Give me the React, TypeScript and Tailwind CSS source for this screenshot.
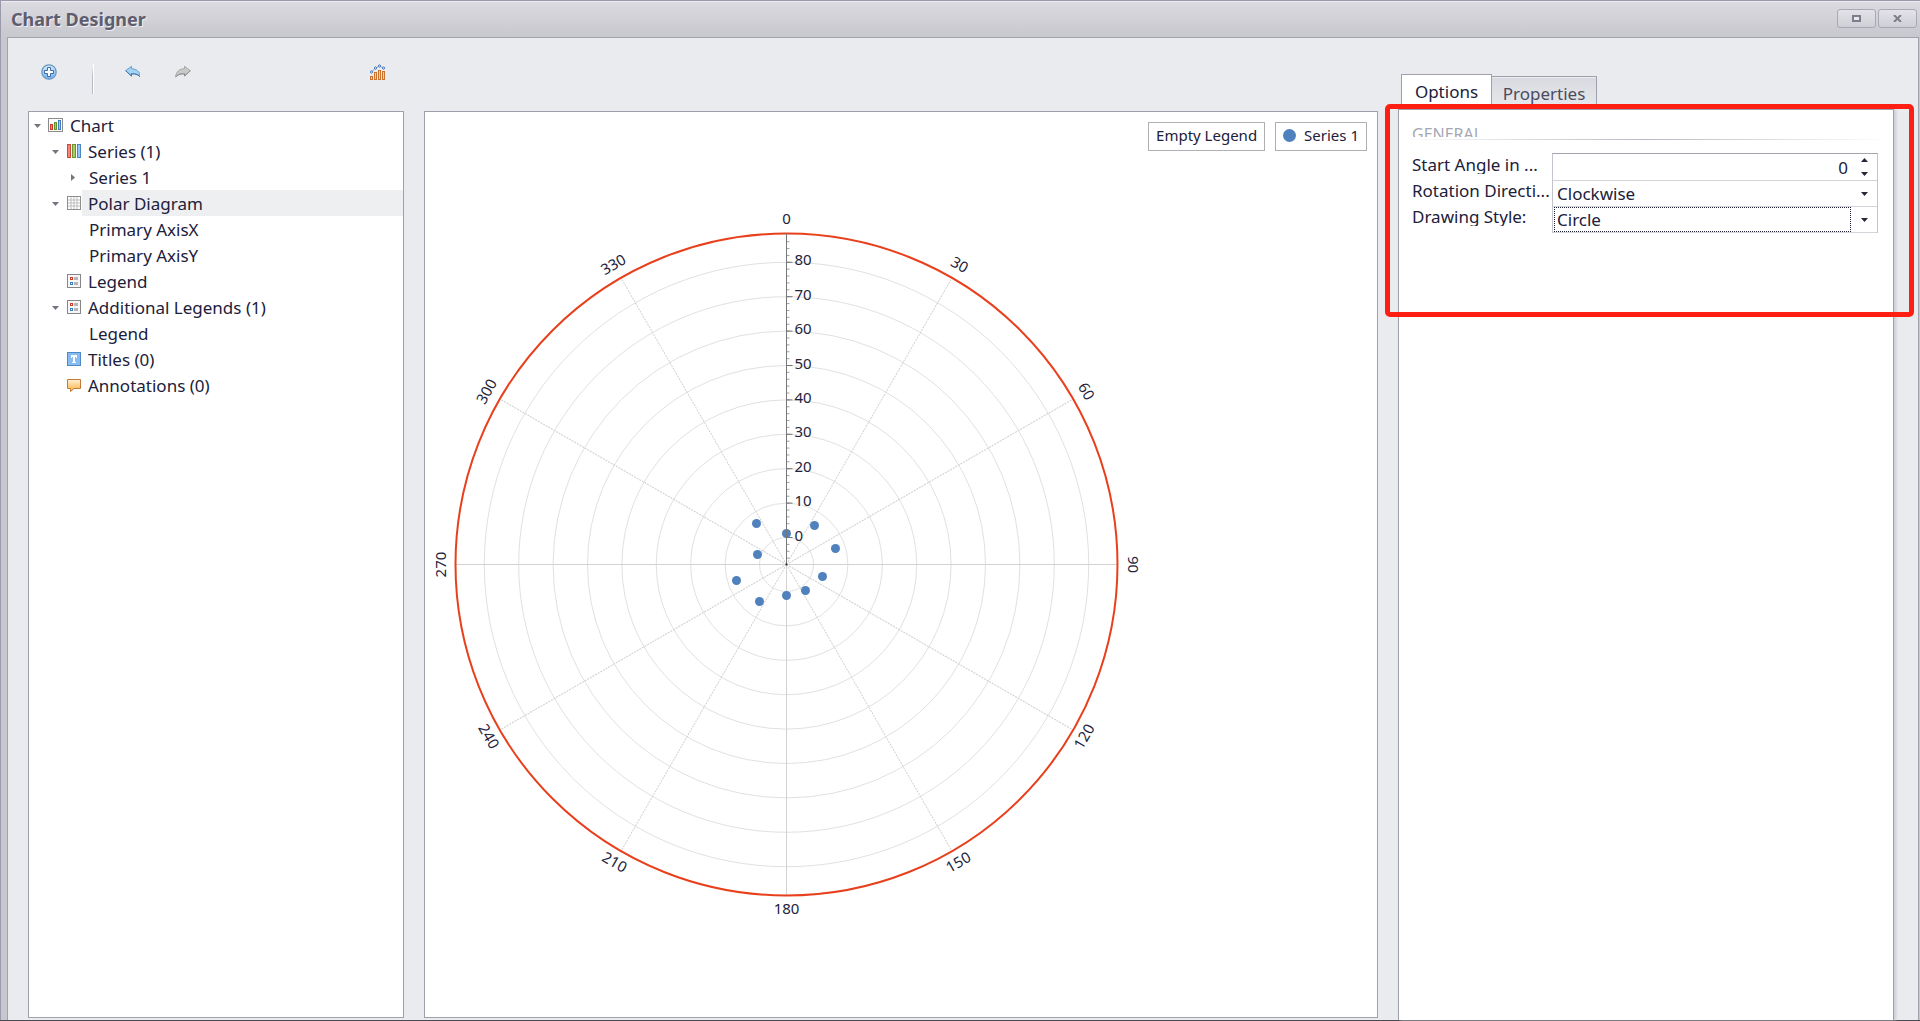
import type { ReactNode } from "react";

/* ---------- small icons ---------- */

function AddIcon() {
  return (
    <svg width="16" height="16" viewBox="0 0 16 16" aria-hidden="true">
      <defs>
        <linearGradient id="add-fill" x1="0" y1="0" x2="0" y2="1">
          <stop offset="0" stopColor="#d8effb" />
          <stop offset="1" stopColor="#6fb0e8" />
        </linearGradient>
      </defs>
      <circle cx="8" cy="8" r="7.2" fill="url(#add-fill)" stroke="#6592bf" strokeWidth="1.2" />
      <path d="M6.5 3.5h3v3h3v3h-3v3h-3v-3h-3v-3h3z" fill="#fff" stroke="#3d6bac" />
    </svg>
  );
}

function ArrowIcon({ kind }: { kind: "undo" | "redo" }) {
  const undo = kind === "undo";
  return (
    <svg width="16" height="16" viewBox="0 0 16 16" aria-hidden="true">
      <g transform={undo ? "translate(1 0)" : "matrix(-1 0 0 1 16 0)"}>
        <path
          d="M.6 6.700 6.500 2.300v2.400c5 .2 8.400 2.800 8.900 8.300-2.200-2.600-4.700-3.400-8.900-3.200v2.200z"
          fill={undo ? "#a3d4f3" : "#c9c9c9"}
          stroke={undo ? "#6a9fca" : "#a6a6a6"}
          strokeLinejoin="round"
        />
        <path
          d="M15.300 13c-1.600-2.200-4.300-3.300-8.800-3.200v2.200L.6 6.700"
          fill="none"
          stroke={undo ? "#3f72a8" : "#8d8d8d"}
          strokeLinejoin="round"
        />
      </g>
    </svg>
  );
}

function WizardIcon() {
  return (
    <svg width="16" height="16" viewBox="0 0 16 16" aria-hidden="true">
      <g fill="#f7cfa0" stroke="#c9732f">
        <rect x=".5" y="12.500" width="2" height="3" />
        <rect x="4.500" y="8.500" width="2" height="7" />
        <rect x="8.500" y="6.500" width="2" height="9" />
        <rect x="12.500" y="7.500" width="2" height="8" />
      </g>
      <path d="M1.500 8 5.500 4l4-2 4 2" fill="none" stroke="#7fa6d6" />
      <g fill="#fff" stroke="#3d70b5">
        <circle cx="1.500" cy="8" r="1.100" />
        <circle cx="5.500" cy="4" r="1.100" />
        <circle cx="9.500" cy="2" r="1.100" />
        <circle cx="13.500" cy="4" r="1.100" />
      </g>
    </svg>
  );
}

function ChartIcon() {
  return (
    <svg width="16" height="16" viewBox="0 0 16 16" aria-hidden="true">
      <rect x=".5" y="1.500" width="14" height="13" fill="#fff" stroke="#8b8b8b" />
      <rect x="2.500" y="7.500" width="2" height="5" fill="#f58a7c" stroke="#cf3a2d" />
      <rect x="6.500" y="5.500" width="2" height="7" fill="#a6cc62" stroke="#64932a" />
      <rect x="10.500" y="3.500" width="2" height="9" fill="#9fd0f7" stroke="#3c7cc0" />
    </svg>
  );
}

function SeriesIcon() {
  return (
    <svg width="16" height="16" viewBox="-1 0 16 16" aria-hidden="true">
      <rect x=".5" y="1.500" width="3" height="13" fill="#f78474" stroke="#d0483b" />
      <rect x="5.500" y="1.500" width="3" height="13" fill="#a8cb62" stroke="#6d9430" />
      <rect x="10.500" y="1.500" width="3" height="13" fill="#93c6f3" stroke="#4a86c2" />
    </svg>
  );
}

function GridIcon() {
  return (
    <svg width="16" height="16" viewBox="-1 0 16 16" aria-hidden="true">
      <rect x=".5" y="1.500" width="13" height="13" fill="#fff" stroke="#8f8f8f" />
      <path d="M4 2v12M7 2v12M10 2v12M1 5h12M1 8h12M1 11h12" stroke="#bdbdbd" fill="none" />
    </svg>
  );
}

function LegendIcon() {
  return (
    <svg width="16" height="16" viewBox="-1 0 16 16" aria-hidden="true">
      <rect x=".5" y="1.500" width="13" height="13" fill="#f7f7f7" stroke="#868686" />
      <rect x="3.500" y="4.500" width="2" height="2" fill="#fff" stroke="#cf3a2d" />
      <rect x="3.500" y="9.500" width="2" height="2" fill="#fff" stroke="#3c7cc0" />
      <path d="M7 4h4v3H7zM7 9h4v3H7z" fill="#b5b5b5" />
    </svg>
  );
}

function TitleIcon() {
  return (
    <svg width="16" height="16" viewBox="-1 0 16 16" aria-hidden="true">
      <rect x=".5" y="1.500" width="13" height="13" fill="#85bcf1" stroke="#5189c2" />
      <path d="M4 4h6v3H9V6H8v5h1v1H5v-1h1V6H5v1H4z" fill="#fff" />
    </svg>
  );
}

function AnnotationIcon() {
  return (
    <svg width="16" height="16" viewBox="-1 0 16 16" aria-hidden="true">
      <defs>
        <linearGradient id="note-fill" x1="0" y1="0" x2="0" y2="1">
          <stop offset="0" stopColor="#fff0d4" />
          <stop offset="1" stopColor="#fdae3c" />
        </linearGradient>
      </defs>
      <path d="M.5 2.500h13v9H7L3.500 14.500v-3h-3z" fill="url(#note-fill)" stroke="#c07b3a" />
    </svg>
  );
}

function Caret({ dir, tone = "fill-[#26263a]" }: { dir: "up" | "down" | "right"; tone?: string }) {
  const path = { up: "M0 4h7L3.500 0z", down: "M0 0h7L3.500 4z", right: "M1 0v7l4-3.500z" }[dir];
  return (
    <svg
      width="7"
      height={dir === "right" ? 7 : 4}
      viewBox={dir === "right" ? "0 0 7 7" : "0 0 7 4"}
      className={tone}
      aria-hidden="true"
    >
      <path d={path} />
    </svg>
  );
}

/* ---------- element tree ---------- */

type Node = {
  label: string;
  indent: string;
  arrow?: "down" | "right";
  icon?: ReactNode;
  selected?: boolean;
};

const nodes: Node[] = [
  { label: "Chart", indent: "pl-0", arrow: "down", icon: <ChartIcon /> },
  { label: "Series (1)", indent: "pl-[18px]", arrow: "down", icon: <SeriesIcon /> },
  { label: "Series 1", indent: "pl-9", arrow: "right" },
  { label: "Polar Diagram", indent: "pl-[18px]", arrow: "down", icon: <GridIcon />, selected: true },
  { label: "Primary AxisX", indent: "pl-9" },
  { label: "Primary AxisY", indent: "pl-9" },
  { label: "Legend", indent: "pl-[18px]", icon: <LegendIcon /> },
  { label: "Additional Legends (1)", indent: "pl-[18px]", arrow: "down", icon: <LegendIcon /> },
  { label: "Legend", indent: "pl-9" },
  { label: "Titles (0)", indent: "pl-[18px]", icon: <TitleIcon /> },
  { label: "Annotations (0)", indent: "pl-[18px]", icon: <AnnotationIcon /> },
];

function Tree() {
  return (
    <ul role="tree" className="w-[376px] shrink-0 border border-[#9fa0ab] bg-white">
      {nodes.map((n, i) => (
        <li key={i} role="treeitem" aria-selected={!!n.selected} className={`flex h-[26px] items-center ${n.indent}`}>
          <span className="flex w-[19px] shrink-0 pl-[5px] pt-px">
            {n.arrow && <Caret dir={n.arrow} tone="fill-[#74757f]" />}
          </span>
          {n.icon && <span className="flex w-4 shrink-0">{n.icon}</span>}
          <span
            className={`h-[26px] flex-1 leading-[28px] whitespace-nowrap ${n.icon ? "pl-[6px]" : "pl-[5px]"} ${
              n.selected ? "bg-[#eeeff1]" : ""
            }`}
          >
            {n.label}
          </span>
        </li>
      ))}
    </ul>
  );
}

/* ---------- polar chart ---------- */

const R = 331;
const radius = (v: number) => 27 + 3.44 * v;
const rings = [0, 10, 20, 30, 40, 50, 60, 70, 80];
const minor = Array.from({ length: 47 }, (_, i) => radius(i * 2 - 6)).filter((r) => r > 2 && r < R);
const angles = Array.from({ length: 12 }, (_, i) => i * 30);
const points = [
  [0, -31], [28, -39], [49, -16], [36, 12], [19, 26],
  [0, 31], [-27, 37], [-50, 16], [-29, -10], [-30, -41],
];

function PolarChart() {
  return (
    <svg
      className="min-h-[723px] w-[723px] shrink-0 self-stretch"
      viewBox="-361.5 -361.5 723 723"
      overflow="visible"
      role="img"
      aria-label="Polar chart"
    >
      <g fill="none" stroke="#e1e1e1">
        {rings.map((v) => (
          <circle key={v} r={radius(v)} />
        ))}
      </g>
      <g stroke="#d2d2d2">
        {angles.map((a) => (
          <line key={a} y2={-R} transform={`rotate(${a})`} strokeDasharray={a % 90 ? "2 1" : undefined} />
        ))}
      </g>
      <circle r={R} fill="none" stroke="#e8401c" strokeWidth="2" />
      <g fill="#4f81bd">
        {points.map(([x, y]) => (
          <circle key={`${x},${y}`} cx={x} cy={y} r="4.500" />
        ))}
      </g>
      <g stroke="#77777a">
        <line y2={-R} />
        {minor.map((r) => (
          <line key={r} y1={-r} y2={-r} x2="3" strokeOpacity=".7" />
        ))}
        {rings.map((v) => (
          <line key={v} y1={-radius(v)} y2={-radius(v)} x2="6" />
        ))}
      </g>
      <circle r="1" fill="#222" />
      <g fontSize="15" fill="#23233b">
        {rings.map((v) => (
          <text key={v} x="8" y={3 - radius(v)}>
            {v}
          </text>
        ))}
        {angles.map((a) => {
          const t = (a * Math.PI) / 180;
          const turn = a <= 90 ? a : a < 270 ? a - 180 : a - 360;
          return (
            <text
              key={a}
              textAnchor="middle"
              y="4"
              transform={`translate(${Math.sin(t) * 345} ${-Math.cos(t) * 345}) rotate(${turn})`}
            >
              {a}
            </text>
          );
        })}
      </g>
    </svg>
  );
}

/* ---------- options ---------- */

function Options() {
  return (
    <div role="group" aria-labelledby="general" className="pt-[17px]">
      <h2 id="general" className="ml-[13px] h-[10px] overflow-hidden text-base leading-[14px] text-[#a5a7b2]">
        GENERAL
      </h2>
      <div className="mx-1 mt-[2px] h-px bg-linear-to-r from-transparent via-[#b9bac2] to-transparent" />
      <div className="mt-[13px] mr-[15px] ml-[13px] flex">
        <div className="flex w-[140px] shrink-0 flex-col gap-[5px] leading-[23px] whitespace-nowrap">
          <label htmlFor="angle" className="h-[21px] overflow-hidden">Start Angle in ...</label>
          <label htmlFor="direction" className="h-[21px] overflow-hidden">Rotation Directi...</label>
          <label htmlFor="style" className="h-[21px] overflow-hidden">Drawing Style:</label>
        </div>
        <div className="min-w-0 flex-1 border-x border-t border-x-[#c3c4cc] border-t-[#a3a4ae]">
          <div className="flex h-[27px] border-b border-[#d3d4da]">
            <input id="angle" type="text" defaultValue="0" className="h-full min-w-0 flex-1 text-right outline-none" />
            <div className="flex w-[29px] flex-col items-center justify-center gap-[10px] pl-1">
              <button type="button" aria-label="Increase" className="flex"><Caret dir="up" /></button>
              <button type="button" aria-label="Decrease" className="flex"><Caret dir="down" /></button>
            </div>
          </div>
          <div className="grid h-[26px] grid-cols-[1fr_25px] grid-rows-[25px] border-b border-[#d3d4da]">
            <select
              id="direction"
              className="col-span-2 col-start-1 row-start-1 h-[25px] w-full appearance-none pl-1 leading-[23px] outline-none"
            >
              <option>Clockwise</option>
            </select>
            <span className="pointer-events-none col-start-2 row-start-1 flex items-center justify-center">
              <Caret dir="down" />
            </span>
          </div>
          <div className="grid h-[26px] grid-cols-[1fr_25px] grid-rows-[25px] border-b border-[#d3d4da]">
            <select
              id="style"
              className="col-start-1 row-start-1 mx-px h-[25px] appearance-none border border-dotted border-[#1c1c30] pl-[2px] leading-[23px] outline-none"
            >
              <option>Circle</option>
            </select>
            <span className="pointer-events-none col-start-2 row-start-1 flex items-center justify-center">
              <Caret dir="down" />
            </span>
          </div>
        </div>
      </div>
    </div>
  );
}

const windowButton =
  "flex h-[19px] w-[39px] items-center justify-center rounded-[3px] border border-[#a9a9b3] bg-linear-to-b from-[#e2e2e8] to-[#cfcfd6]";

export default function App() {
  return (
    <div className="flex min-h-screen flex-col border-b border-b-[#4a4a52] bg-[#c8c7cf] font-['Noto_Sans',sans-serif] text-[17px] text-[#20203a]">
      <header className="flex h-[37px] shrink-0 justify-between border-t border-l border-[#9b9aab] bg-linear-to-b from-[#dcdbe1] to-[#c7c7ce] pr-[3px] pl-[10px] shadow-[inset_0_1px_0_#ebebf0]">
        <h1 className="pt-[6px] text-lg leading-6 font-bold text-[#5e5d6e] [text-shadow:1px_1px_0_#f0f0f4]">
          Chart Designer
        </h1>
        <div className="flex gap-[2px] pt-2">
          <button type="button" aria-label="Maximize" className={windowButton}>
            <span className="h-[7px] w-[9px] border-2 border-[#7e7e8b] bg-[#e8e8ed]" />
          </button>
          <button type="button" aria-label="Close" className={windowButton}>
            <svg width="9" height="7" viewBox="0 0 9 7" aria-hidden="true">
              <path d="M1 0l7 7M8 0L1 7" stroke="#7e7e8b" strokeWidth="2" />
            </svg>
          </button>
        </div>
      </header>

      <div className="flex flex-1 border-l border-[#9b9aab] pr-px pl-[6px]">
        <main className="flex flex-1 gap-5 border-x border-t border-[#a2a2ac] bg-[#eaebef] pr-6 pl-5">
          <div className="flex min-w-0 flex-1 flex-col pb-[2px]">
            <div className="flex h-[73px] shrink-0 items-start pt-[26px] pl-[13px]">
              <button type="button" aria-label="Add" className="flex"><AddIcon /></button>
              <span className="ml-[35px] h-[30px] w-[2px] border-r border-white bg-linear-to-b from-transparent from-10% to-[#b9bac2] to-40%" />
              <button type="button" aria-label="Undo" className="ml-[30px] flex"><ArrowIcon kind="undo" /></button>
              <button type="button" aria-label="Redo" className="ml-[35px] flex"><ArrowIcon kind="redo" /></button>
              <button type="button" aria-label="Run wizard" className="ml-[179px] flex"><WizardIcon /></button>
            </div>
            <div className="flex flex-1 gap-5">
              <Tree />
              <section className="flex min-w-0 flex-1 items-start justify-between border border-[#9fa0ab] bg-white">
                <PolarChart />
                <div className="flex shrink-0 gap-[10px] pt-[10px] pr-[10px] text-[15px] whitespace-nowrap">
                  <span className="flex h-[29px] items-center border border-[#b0b0b4] px-[7px] pb-[2px]">Empty Legend</span>
                  <span className="flex h-[29px] items-center gap-2 border border-[#b0b0b4] px-[7px] pb-[2px]">
                    <span className="size-[13px] rounded-full bg-[#4f81bd]" />
                    Series 1
                  </span>
                </div>
              </section>
            </div>
          </div>

          <aside className="flex w-[496px] shrink-0 flex-col pt-9">
            <div role="tablist" className="flex h-[35px] shrink-0 items-end pl-[3px]">
              <button
                type="button"
                role="tab"
                aria-selected="true"
                className="h-[35px] w-[91px] border-x border-t border-[#9fa0ab] bg-white"
              >
                Options
              </button>
              <button
                type="button"
                role="tab"
                aria-selected="false"
                className="h-[33px] w-[105px] border-t border-r border-[#9fa0ab] bg-linear-to-b from-[#d9dadf] to-[#e8e9ed] pt-px text-[#4b4b60] shadow-[inset_0_1px_0_#ededf1]"
              >
                Properties
              </button>
            </div>
            <section className="relative flex-1 border-x border-t border-[#9fa0ab] bg-white shadow-[2px_0_3px_#c9cad1]">
              <Options />
              <div className="pointer-events-none absolute -top-[6px] -right-[21px] -left-[14px] h-[213px] rounded-[5px] border-5 border-[#ff1f12]" />
            </section>
          </aside>
        </main>
      </div>
    </div>
  );
}
